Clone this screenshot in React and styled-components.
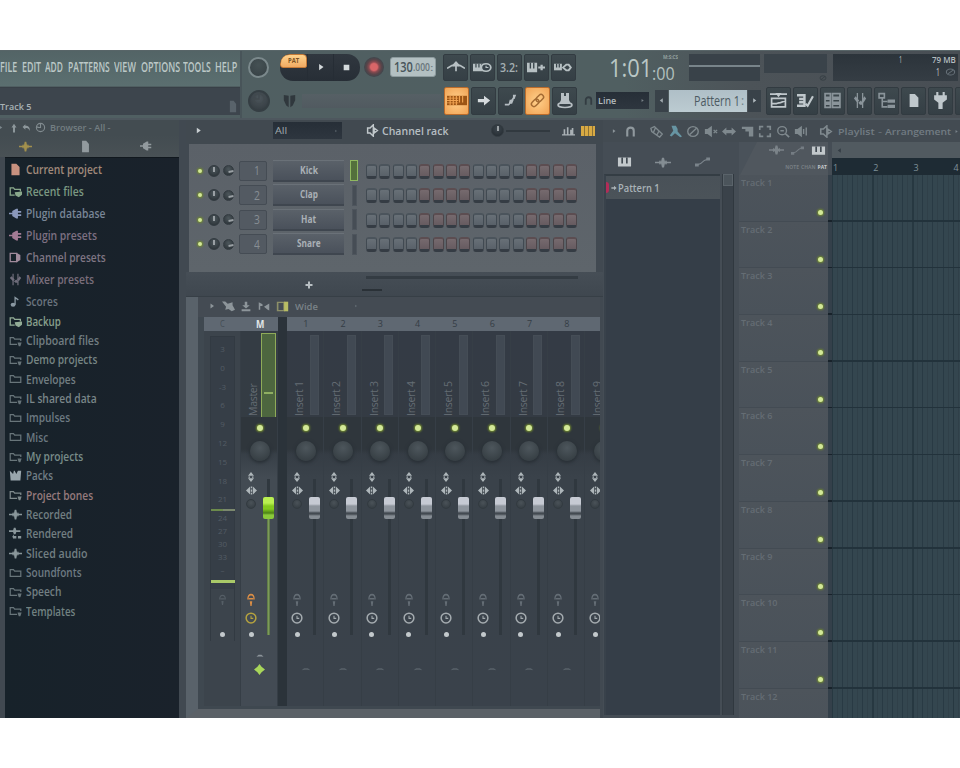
import React, { useLayoutEffect, useRef } from "react";
import styled, { createGlobalStyle, css } from "styled-components";

const Global = createGlobalStyle`
  * { box-sizing: border-box; }
  html, body { margin: 0; padding: 0; background: #fff; }
  body { width: 960px; height: 768px; overflow: hidden; font-family: "Open Sans", "Noto Sans", sans-serif; }
  svg { display: block; flex: none; }
`;

/* ---------- condensed text ---------- */
const FitBox = styled.span`
  display: block;
  flex: none;
  width: ${(p) => p.$w}px;
  height: ${(p) => Math.round(p.$size * 1.4)}px;
  line-height: ${(p) => Math.round(p.$size * 1.4)}px;
  font-size: ${(p) => p.$size}px;
  font-weight: ${(p) => p.$weight || 400};
  color: ${(p) => p.$color};
  margin-left: ${(p) => p.$ml || 0}px;
  white-space: nowrap;
`;
const FitInner = styled.span`
  display: inline-block;
  transform-origin: 0 50%;
`;
function Text({ w, size = 12, weight, color = "#9aa3a6", ml, children }) {
  const ref = useRef(null);
  useLayoutEffect(() => {
    ref.current.style.transform = `scaleX(${w / ref.current.offsetWidth})`;
  }, [w, children]);
  return (
    <FitBox $w={w} $size={size} $weight={weight} $color={color} $ml={ml}>
      <FitInner ref={ref}>{children}</FitInner>
    </FitBox>
  );
}

/* ---------- icons, drawn on a 16 unit grid ---------- */
const S = { fill: "none", stroke: "currentColor", strokeWidth: 1.6 };
const F = { fill: "currentColor" };
const icons = {
  play: <path {...F} d="M5 3l7 5-7 5z" />,
  left: <path {...F} d="M11 3L4 8l7 5z" />,
  stop: <path {...F} d="M3 3h10v10H3z" />,
  file: <path {...F} d="M3 1h6l4 4v10H3z" />,
  folder: <path {...S} strokeWidth="1.5" d="M1.5 12.5v-9h4l1.5 2h7.5v7z" />,
  folderDot: <><path {...S} strokeWidth="1.5" d="M10 12.500H1.500v-9h4l1.500 2h7.500V8" /><path {...F} d="M10.500 10h5l-1.500 5h-2z" /></>,
  folderTick: <><path {...S} strokeWidth="1.600" d="M7 12.500H1.500v-9h4l1.500 2h7V8" /><path {...F} d="M7 9l9-1v4l-4 3-4-2z" /></>,
  plug: <path {...F} d="M0 7h4V5l5-3h2v3h4v2h-4v2h4v2h-4v3H9l-5-3V9H0z" />,
  channel: <><path {...S} d="M1.500 3h8v10h-8z" /><path {...F} d="M9 2l5 3v6l-5 3z" /></>,
  mixer: <><path {...S} strokeWidth="1.500" d="M5 1v14M11 1v14" /><path {...F} d="M1 6l4 4 2-2-4-4zM6 10l3-2 2 2v2H8zM10 8l3-4 2 2-3 4z" /></>,
  note: <><ellipse {...F} cx="5" cy="12" rx="3" ry="2.500" /><path {...S} d="M7.500 12V3l4 3" /></>,
  pack: <path {...F} d="M1 2l4 4 1-4h1l2 4 2-4h1l3 0-1 12H2z" />,
  wave: <path {...F} d="M0 7h4l1-2 1 2 1-5h2l1 5 1-2 1 2h4v2h-4l-1 2-1-2-1 5H7L6 9l-1 2-1-2H0z" />,
  waveDot: <><path {...F} d="M0 4h5l1-3h2l1 3h5v2H9L8 9H6L5 6H0zM6 11h3v3H6zM11 11h4v3h-4zM4 12l2-3v6z" /></>,
  arrowUp: <path {...F} d="M8 1l5 6h-3v8H6V7H3z" />,
  undo: <path {...F} d="M6 2v3c6 0 8 3 8 9-2-4-4-5-8-5v3L1 7z" />,
  clock: <><circle {...S} cx="8" cy="8" r="6" /><path {...S} d="M8 3v5H4V6" /></>,
  metronome: <><path {...S} strokeWidth="1.500" d="M0 9c3-3 5-4 8-4s5 1 8 4M8 3v9" /><path {...F} d="M5 5l3-4 3 4v2H5z" /></>,
  keysClock: <><path {...F} d="M0 4h9v8H0z" /><path stroke="#38434a" strokeWidth="1" d="M2.500 4v4M5 4v4M7.500 4v4" /><circle cx="11" cy="8" r="4" fill="#38434a" stroke="currentColor" strokeWidth="1.500" /><path {...S} strokeWidth="1" d="M11 6v2h2" /></>,
  keysPlus: <><path {...F} d="M0 3h9v10H0zM10 7h6v2h-6zM12 5h2v6h-2z" /><path stroke="#38434a" strokeWidth="1.200" d="M3 3v6M6 3v6" /></>,
  keysLoop: <><path {...F} d="M0 4h7v7H0z" /><path stroke="#38434a" strokeWidth="1.100" d="M2.300 4v4M4.700 4v4" /><path {...S} strokeWidth="1.800" d="M8 8l3-3h2l2 3-2 3h-2z" /></>,
  piano: <><path {...F} d="M1 2h14v12H1z" /><path stroke="#3b444c" strokeWidth="1.700" d="M5.500 2v8M10.500 2v8" /></>,
  typing: <><path fill="#9c5515" d="M0 3h16v10H0z" /><path stroke="#f2a452" strokeWidth=".9" d="M0 5.500h9M0 8h9M0 10.500h9M2.500 3v10M5 3v10M7.500 3v10M10 3v7M12.500 3v7" /></>,
  right: <path {...F} d="M1 6h7V2l7 6-7 6v-4H1z" />,
  steps: <><path {...S} strokeWidth="2" d="M1 13h5c1 0 1-4 3-4l4-6" /><path {...F} d="M7 7l5 0-2 5H6zM11 1h4l-2 5h-2z" /></>,
  link: <g {...S} strokeWidth="1.600" transform="rotate(-45 8 8)"><rect x="0" y="5.300" width="9" height="5.400" rx="2.700" /><rect x="7" y="5.300" width="9" height="5.400" rx="2.700" /></g>,
  stamp: <><path {...F} d="M4 0h3v3h2V0h3v7l1 2v2H3V9l1-2z" /><ellipse cx="8" cy="12" rx="7" ry="2.500" {...S} /></>,
  magnet: <path {...S} strokeWidth="2.600" d="M4 14V7c0-5 8-5 8 0v7" />,
  playlist: <><path {...S} d="M1.500 6h13v8h-13zM1 11h4c2 0 2-1 5-1l5-2M0 2h16" /><path {...F} d="M5 1h6L8 5z" /></>,
  pianoRoll: <><path {...S} strokeWidth="2.300" d="M0 3h7v3.500H2M7 6.500V13H0M2 9.700h5" /><path {...S} strokeWidth="2" d="M8 11l2 2 5-9" /></>,
  rack: <path {...S} strokeWidth="1.600" d="M1 1.500h5V5H1zM8 1.500h7V5H8zM1 6.700h5v3H1zM8 6.700h7v3H8zM1 11.500h5v3H1zM8 11.500h7v3H8z" />,
  tree: <><path {...S} strokeWidth="1.500" d="M1 1.500h5v4H1zM4 6v8h5M4 9h5" /><path {...F} d="M9 7h7v3H9zM9 12h7v3H9z" /></>,
  jack: <path {...F} d="M4 0h2v3h4V0h2v3h2v4l-4 3v6H6v-6L2 7V3h2z" />,
  teeth: <path {...F} d="M1 1l6 1v13L4 13 1 7zM15 1L9 2v13l3-2 3-6z" />,
  speaker: <><path {...F} d="M1 5h3l5-4v14l-5-4H1z" /><path {...S} d="M11 5v6M14 3v10" /></>,
  mute: <><path {...F} d="M1 5h3l5-4v14l-5-4H1z" /><path {...S} d="M11 6l4 4M15 6l-4 4" /></>,
  speakerOut: <path {...S} strokeWidth="1.800" d="M2 5h3l4-4v14l-4-4H2zM10 5l4 3-4 3z" />,
  tag: <g {...S}><path d="M1 4l4-2 9 9-3 4L2 8zM6 4l-2 5M10 8l-2 4" /></g>,
  brush: <path {...F} d="M4 1l5 0 2 4 0 3 5 6-2 1-6-5-4 4-2-1 4-6z" />,
  ban: <><circle {...S} cx="8" cy="8" r="6" /><path {...S} d="M4 12l8-8" /></>,
  both: <path {...F} d="M0 8l5-5v3h6V3l5 5-5 5v-3H5v3z" />,
  slice: <path {...F} d="M1 2h13v12H9V8H5V5H1z" />,
  marquee: <path {...S} strokeWidth="1.900" d="M2 6V2h4M10 2h4v4M14 10v4h-4M6 14H2v-4" />,
  zoom: <><circle {...S} cx="7" cy="7" r="5" /><path {...S} strokeWidth="2" d="M10.500 10.500L15 15M5 7h4" /></>,
  curve: <><path {...S} strokeWidth="1.300" d="M2 12l4-2 4-4 4-2" /><path {...F} d="M0 10h4v4H0zM12 2h4v4h-4z" /></>,
  bars: <path {...F} d="M0 15v-2h2V5h2v8h2V2h2v11h2V6h2v-3h2v10h2v2z" />,
  plus: <path {...F} d="M6 1h4v5h5v4h-5v5H6v-5H1V6h5z" />,
  diamond: <path {...F} d="M8 0l3 4 5 4-5 4-3 4-3-4-5-4 5-4z" />,
  import: <path {...F} d="M6 1h4v5h4l-6 5-6-5h4zM1 12h14v3H1z" />,
  scissors: <path {...F} d="M0 2h4l3 3 6-2 0 4 3 6-4 2-4-3-4 1 1-4z" />,
  flip: <path {...F} d="M1 2l5 3v3l-3 0v6H1zM15 4v11l-2-1-5-5z" />,
  view: <><path fill="none" stroke="#8c8f68" strokeWidth="2" d="M2 2h8v12H2z" /><path fill="#b8bd64" d="M10 1h5v14h-5z" /></>,
  updown: <><path {...F} d="M8 0l6 6H2zM2 10h12l-6 6zM3 7h3v2H3zM10 7h3v2h-3z" /></>,
  sideways: <><path {...F} d="M6 1v14L0 8zM10 1v14l6-7z" /><path {...F} d="M7 1h2v3H7zM7 6h2v4H7zM7 12h2v3H7z" /></>,
  ghost: <><path {...S} strokeWidth="2" d="M3 8c0-8 10-8 10 0" /><path {...F} d="M4 6h8v2H4zM6 10h4l-1 6H7z" /></>,
  timer: <><circle {...S} cx="8" cy="8" r="6.500" strokeWidth="2" /><path {...S} strokeWidth="1.400" d="M8 5v3.500h3" /></>,
  caret: <path {...F} d="M1 11l4-5h6l4 5-5-1H6z" />,
};
const IconSvg = styled.svg`
  color: ${(p) => p.$color};
  margin-left: ${(p) => p.$ml || 0}px;
`;
const Icon = ({ n, s = 14, h, c = "#aeb6ba", ml }) => (
  <IconSvg viewBox="0 0 16 16" width={s} height={h || s} preserveAspectRatio="none" $color={c} $ml={ml}>
    {icons[n]}
  </IconSvg>
);

/* ---------- frame ---------- */
const Frame = styled.main`
  margin-top: 50px;
  width: 960px;
  height: 668px;
  overflow: hidden;
  background: #444c54;
`;
const Header = styled.header`
  height: 68px;
  display: grid;
  grid-template-columns: 242px 1fr;
  background: linear-gradient(90deg, #505f62 0, #505f61 65%, #4c5358 78%, #484e54 100%);
  border-top: 1px solid #586568;
`;
const HeaderLeft = styled.div`
  display: flex;
  flex-direction: column;
  border-right: 2px solid #485459;
`;
const MenuBar = styled.nav`
  height: 35px;
  display: flex;
  align-items: center;
  background: linear-gradient(#536466, #5b6f70);
  padding-bottom: 2px;
`;
const HintBar = styled.div`
  height: 28px;
  margin-top: 1px;
  background: #3d454d;
  display: flex;
  align-items: flex-end;
  justify-content: space-between;
  border-top: 1px solid #384047;
  padding: 0 2px 2px 0;
`;
const Bars = styled.div`
  display: flex;
  flex-direction: column;
  overflow: hidden;
`;
const Bar = styled.div`
  height: ${(p) => p.$h}px;
  display: flex;
  align-items: center;
  background: ${(p) => p.$bg || "none"};
`;
const Knob = styled.div`
  width: ${(p) => p.$s}px;
  height: ${(p) => p.$s}px;
  margin-left: ${(p) => p.$ml || 0}px;
  flex: none;
  border-radius: 50%;
  border: ${(p) => p.$ring || "1px solid #333b41"};
  background: radial-gradient(circle at 50% 35%, ${(p) => p.$hi || "#4d575c"}, ${(p) => p.$lo || "#343d43"});
  box-shadow: ${(p) => p.$shadow || "none"};
  display: flex;
  justify-content: center;
`;
const Tick = styled.i`
  width: 2px;
  height: 5px;
  margin-top: 1px;
  background: #9aa0a4;
  transform: ${(p) => (p.$side ? "translate(2px, 2px) rotate(80deg)" : "none")};
`;
const Transport = styled.div`
  width: 80px;
  height: 27px;
  margin-left: 11px;
  flex: none;
  border-radius: 10px 13px 13px 13px;
  background: linear-gradient(#30373f, #272e36);
  display: flex;
  overflow: hidden;
`;
const PatSwitch = styled.div`
  width: 27px;
  height: 14px;
  border-radius: 9px 4px 2px 3px;
  background: linear-gradient(#ffd38d, #f0aa63);
  border: 1px solid #c47a38;
  display: flex;
  align-items: center;
  justify-content: center;
`;
const TransportKey = styled.div`
  width: 26px;
  display: flex;
  align-items: center;
  justify-content: center;
  border-left: 1px solid #262d35;
`;
const Record = styled.div`
  width: 20px;
  height: 20px;
  margin-left: 4px;
  flex: none;
  border-radius: 50%;
  background: radial-gradient(circle, #d96668 0 24%, #894a50 36%, #5a4449 52%, #42464c 68%);
`;
const Tempo = styled.div`
  width: 46px;
  height: 20px;
  margin-left: 6px;
  flex: none;
  border-radius: 3px;
  background: #b3c0c2;
  border: 1px solid #8d9b9e;
  display: flex;
  align-items: center;
  padding-left: 3px;
`;
const Tool = styled.div`
  width: 25px;
  height: ${(p) => p.$h || 27}px;
  margin-left: ${(p) => p.$ml ?? 2}px;
  flex: none;
  border-radius: 2px;
  display: flex;
  align-items: center;
  justify-content: center;
  background: linear-gradient(#3e494e, #353f45);
  border: 1px solid #323b41;
  ${(p) => p.$on && css`
    background: radial-gradient(#ffd08b, #f1a354);
    border-color: #ba6c2c;
  `}
`;
const Dark = styled.div`
  width: ${(p) => p.$w}px;
  height: ${(p) => p.$h}px;
  margin-left: ${(p) => p.$ml}px;
  margin-top: ${(p) => p.$mt || 0}px;
  flex: none;
  background: ${(p) => p.$bg || "#394249"};
  display: flex;
  flex-direction: ${(p) => p.$dir || "row"};
  align-items: ${(p) => p.$align || "center"};
  justify-content: ${(p) => p.$just || "flex-start"};
  padding: ${(p) => p.$pad || 0};
`;
const ScopeLine = styled.div`
  width: 100%;
  height: 2px;
  margin-top: -3px;
  background: #78848a;
`;
const Slider = styled.div`
  width: ${(p) => p.$w}px;
  height: ${(p) => p.$h || 2}px;
  margin-left: ${(p) => p.$ml}px;
  flex: none;
  background: ${(p) => p.$c || "#3e484d"};
`;
const PatternName = styled.div`
  width: 78px;
  height: 22px;
  margin-left: 1px;
  flex: none;
  display: flex;
  align-items: center;
  background: linear-gradient(#afbfc7, #bccbd1);
`;
const CpuRow = styled.div`
  display: flex;
  justify-content: flex-end;
  align-items: center;
  gap: ${(p) => p.$gap}px;
  height: 12px;
`;

/* ---------- browser ---------- */
const Body = styled.div`
  height: 600px;
  display: grid;
  grid-template-columns: 186px 417px 357px;
`;
const Browser = styled.aside`
  background: #414951;
  border-top: 2px solid #4e575e;
  padding: 0 7px 0 0;
`;
const BrowserPath = styled.div`
  height: 15px;
  display: flex;
  align-items: center;
  background: #434c51;
`;
const BrowserTabs = styled.div`
  height: 22px;
  display: flex;
  align-items: center;
  background: linear-gradient(#434c51, #495155);
`;
const FileList = styled.div`
  margin-left: 5px;
  height: 561px;
  background: linear-gradient(90deg, #17222a, #1a222b);
  border-top: 1px solid #11181e;
`;
const FileRow = styled.div`
  height: ${(p) => (p.$big ? 22 : 19.35)}px;
  display: flex;
  align-items: center;
  padding: 0 0 ${(p) => (p.$big ? 0 : 1)}px 4px;
`;
const files = [
  ["file", "Current project", 76, "#a18a7b", "#c8917f"],
  ["folderTick", "Recent files", 58, "#7b9982", "#8aa98c"],
  ["plug", "Plugin database", 79, "#798697", "#8a98bb"],
  ["plug", "Plugin presets", 71, "#7d7082", "#a37b94"],
  ["channel", "Channel presets", 80, "#7f7684", "#a18b9c"],
  ["mixer", "Mixer presets", 68, "#7a6e7b", "#6f6d7b"],
  ["note", "Scores", 32, "#6b757f", "#8a98a2"],
  ["folderTick", "Backup", 35, "#88a08d", "#93ad97"],
  ["folderDot", "Clipboard files", 73, "#727e82"],
  ["folderDot", "Demo projects", 71, "#778685"],
  ["folder", "Envelopes", 50, "#727e82"],
  ["folderDot", "IL shared data", 71, "#7a8689"],
  ["folder", "Impulses", 44, "#6d7a82"],
  ["folder", "Misc", 22, "#6b7880"],
  ["folderDot", "My projects", 57, "#788c89"],
  ["pack", "Packs", 27, "#727f87", "#99a6ad"],
  ["folderDot", "Project bones", 67, "#967b7d", "#7f8a8c"],
  ["wave", "Recorded", 46, "#727f82", "#89969a"],
  ["waveDot", "Rendered", 47, "#727f82", "#89969a"],
  ["wave", "Sliced audio", 61, "#727f82", "#89969a"],
  ["folder", "Soundfonts", 56, "#6d7a82"],
  ["folderDot", "Speech", 35, "#727f82"],
  ["folderDot", "Templates", 49, "#728282"],
];

/* ---------- channel rack ---------- */
const Middle = styled.section`
  display: flex;
  flex-direction: column;
  overflow: hidden;
  background: #414951;
  border-top: 2px solid #4e575e;
`;
const RackTitle = styled.div`
  height: 24px;
  display: flex;
  align-items: center;
  background: #414950;
  padding-bottom: 3px;
`;
const Select = styled.div`
  width: ${(p) => p.$w}px;
  height: 17px;
  margin-left: ${(p) => p.$ml}px;
  flex: none;
  display: flex;
  align-items: center;
  justify-content: space-between;
  padding: 0 4px 0 2px;
  background: linear-gradient(#262e37, #2e363f);
`;
const RackBody = styled.div`
  width: 407px;
  height: 128px;
  margin-left: 3px;
  padding-top: 14.500px;
  background: linear-gradient(#5b6168, #5e656b);
`;
const ChannelRow = styled.div`
  height: 24.500px;
  display: flex;
  align-items: center;
`;
const Led = styled.i`
  width: ${(p) => p.$s || 5}px;
  height: ${(p) => p.$s || 5}px;
  margin-left: ${(p) => p.$ml || 0}px;
  flex: none;
  border-radius: 50%;
  background: #d3e898;
  box-shadow: 0 0 2px 1px #71892f;
`;
const ChannelNumber = styled.div`
  width: 28px;
  height: 20px;
  margin-left: 5px;
  padding-left: 14px;
  flex: none;
  display: flex;
  align-items: center;
  background: #535a62;
  border: 1px solid #454c54;
  border-radius: 2px;
`;
const ChannelName = styled.div`
  width: 71px;
  height: 22px;
  margin-left: 6px;
  flex: none;
  display: flex;
  align-items: center;
  justify-content: center;
  padding-bottom: 1px;
  background: linear-gradient(#5a6169, #4a515b);
  border-bottom: 2px solid #3f464f;
  border-top: 1px solid #6a7178;
`;
const ChannelSelect = styled.div`
  width: ${(p) => (p.$on ? 8 : 5)}px;
  height: 21px;
  flex: none;
  margin: 0 ${(p) => (p.$on ? 8 : 9.500)}px 0 ${(p) => (p.$on ? 6 : 7.500)}px;
  background: ${(p) => (p.$on ? "#53703c" : "#464d55")};
  border: 1px solid ${(p) => (p.$on ? "#8fb860" : "#4e555d")};
`;
const Step = styled.i`
  width: 11px;
  height: 15px;
  margin: 1px 2.350px 0 0;
  flex: none;
  border-radius: 3px;
  border: 1px solid ${(p) => (p.$red ? "#4c4549" : "#414a52")};
  border-top: 2px solid ${(p) => (p.$red ? "#5c4d51" : "#4b545c")};
  border-bottom: 3px solid #353c44;
  background: linear-gradient(${(p) => (p.$red ? "#766a6e, #665b60" : "#687077, #596169")});
`;
const RackFooter = styled.div`
  height: 25px;
  display: grid;
  grid-template-columns: 172px 239px;
  align-items: center;
  background: linear-gradient(#464e56, #3f474f);
  border-bottom: 1px solid #373f46;
`;
const AddChannel = styled.div`
  padding: 2px 0 0 119px;
`;
const Scrollers = styled.div`
  display: flex;
  flex-direction: column;
  gap: 10px;
  padding-bottom: 2px;
`;
const channels = [["1", "Kick", 18], ["2", "Clap", 18], ["3", "Hat", 15], ["4", "Snare", 24]];

/* ---------- mixer ---------- */
const Mixer = styled.div`
  flex: 1;
  width: 414px;
  border-left: 12px solid #59626a;
  border-bottom: 9px solid #5b6167;
  background: #3f4850;
  padding: 0 0 5px 6px;
  overflow: hidden;
`;
const MixerBar = styled.div`
  height: 20px;
  display: flex;
  align-items: center;
  padding-bottom: 2px;
  background: #444b53;
  margin-left: -6px;
`;
const Strips = styled.div`
  display: flex;
  height: 389px;
  overflow: hidden;
`;
const Strip = styled.div`
  width: ${(p) => p.$w || 37.300}px;
  flex: none;
  display: flex;
  flex-direction: column;
  background: ${(p) => p.$bg || "linear-gradient(#343b45 30px, #343b43 130px, #3a424a 160px, #3a424b)"};
  border-right: 1px solid #363e46;
`;
const StripNumber = styled.div`
  height: 14px;
  flex: none;
  margin-right: -1px;
  background: #5f6872;
  display: flex;
  justify-content: center;
  align-items: center;
  padding-bottom: 1px;
`;
const StripTop = styled.div`
  height: 86px;
  flex: none;
  display: flex;
  padding: 3px 0 0 6px;
`;
const VerticalName = styled.div`
  width: 12px;
  height: 82px;
  display: flex;
  writing-mode: vertical-rl;
  transform: rotate(180deg);
  font: 10.500px/12px "Open Sans", sans-serif;
  letter-spacing: -0.300px;
  color: #656d74;
`;
const Level = styled.div`
  width: ${(p) => (p.$master ? 15 : 9)}px;
  height: ${(p) => (p.$master ? 85 : 80)}px;
  margin-left: ${(p) => (p.$master ? 2 : 4.500)}px;
  margin-top: ${(p) => (p.$master ? -1 : 1)}px;
  flex: none;
  background: ${(p) => (p.$master ? "#4d663f" : "#414953")};
  border: ${(p) => (p.$master ? "1.500px solid #8fab59" : "1px solid #454d56")};
  display: flex;
  align-items: center;
  padding-top: 34px;
`;
const LevelMark = styled.i`
  width: 9px;
  height: 2px;
  margin: auto;
  background: #8fae62;
`;
const StripPan = styled.div`
  height: 52px;
  flex: none;
  display: flex;
  flex-direction: column;
  align-items: center;
  padding: 8px 0 0 1px;
  gap: 10px;
  background: linear-gradient(#2f363c 0 32px, transparent 37px);
`;
const StripLow = styled.div`
  flex: 1;
  display: grid;
  grid-template-columns: 20px 15px;
`;
const Switches = styled.div`
  display: flex;
  flex-direction: column;
  align-items: center;
  padding-top: 3px;
`;
const Gap = styled.div`
  height: ${(p) => p.$h}px;
  flex: none;
`;
const Dot = styled.i`
  width: 5px;
  height: 5px;
  flex: none;
  border-radius: 50%;
  background: #c3c9cc;
`;
const FaderTrack = styled.div`
  width: 15px;
  display: flex;
  flex-direction: column;
  align-items: center;
  padding-top: 10px;
  height: 166px;
`;
const FaderLine = styled.i`
  width: 3px;
  flex: ${(p) => (p.$h ? "none" : "1")};
  height: ${(p) => p.$h || 0}px;
  background: ${(p) => (p.$on ? "linear-gradient(90deg, #54703f, #7c9a5a, #54703f)" : "#30383f")};
`;
const FaderCap = styled.div`
  width: 11px;
  height: 22px;
  flex: none;
  border-radius: 2px;
  background: ${(p) => p.$on
    ? "linear-gradient(#b9ef51 0 6px, #83c91e 9px 12px, #4d8216 16px, #8ac93a 18px)"
    : "linear-gradient(#c6cad3 0 7px, #8e959d 9px 14px, #434a51 16px 17px, #858c93 19px)"};
`;
const StripFoot = styled.div`
  height: 70px;
  flex: none;
  display: flex;
  flex-direction: column;
  align-items: center;
  padding: 15px 0 0 1px;
  gap: 5px;
`;
const Separator = styled.div`
  width: 9px;
  flex: none;
  background: #2b333a;
`;
const Meter = styled.div`
  width: 25px;
  height: 305px;
  margin: 5px 0 0 6px;
  flex: none;
  display: flex;
  flex-direction: column;
  align-items: center;
  background: linear-gradient(#363e47 0 252px, #3c444c 252px);
  border: 1px solid #323a42;
  border-bottom: 0;
  font: 8px/18.800px "Open Sans", sans-serif;
  color: #535c65;
  padding-top: 3px;
`;
const MeterPeak = styled.i`
  width: 24px;
  height: ${(p) => p.$h}px;
  flex: none;
  background: ${(p) => p.$c};
`;
const MeterFine = styled.div`
  height: 69px;
  line-height: 13px;
  text-align: center;
`;

/* ---------- playlist ---------- */
const Playlist = styled.section`
  display: flex;
  flex-direction: column;
  overflow: hidden;
  background: #454d55;
  border-top: 2px solid #4e575e;
`;
const PlaylistBar = styled.div`
  height: 22px;
  flex: none;
  display: flex;
  align-items: center;
  background: #434b52;
`;
const PlaylistBody = styled.div`
  flex: 1;
  display: grid;
  grid-template-columns: 136px 89px 4px 128px;
  overflow: hidden;
`;
const Picker = styled.div`
  display: flex;
  flex-direction: column;
`;
const PickerTabs = styled.div`
  height: 32px;
  flex: none;
  display: flex;
  align-items: center;
  padding-top: 8px;
`;
const PickerMain = styled.div`
  flex: 1;
  display: grid;
  grid-template-columns: 116px 12px;
  gap: 2px;
  padding: 0 0 3px 1px;
`;
const PatternList = styled.div`
  background: #353e48;
  border-top: 2px solid #343d44;
  border-left: 2px solid #39424b;
`;
const PatternItem = styled.div`
  height: 23px;
  display: flex;
  align-items: center;
  background: linear-gradient(#495158, #4b5359);
`;
const PatternTag = styled.i`
  width: 3px;
  height: 11px;
  background: #b32c58;
  border-radius: 0 4px 4px 0;
`;
const ScrollTrack = styled.div`
  background: #3a424a;
  border-right: 1px solid #30383f;
  border-left: 1px solid #343c43;
`;
const ScrollThumb = styled.div`
  height: 12px;
  background: #4b545b;
  border: 1px solid #5a636a;
`;
const Tracks = styled.div`
  display: flex;
  flex-direction: column;
  overflow: hidden;
  background: #4a525a;
`;
const TracksHead = styled.div`
  height: 33px;
  flex: none;
  background: #50575e;
  clip-path: polygon(18px 0, 100% 0, 100% 100%, 1px 100%);
  padding: 0 1px 0 30px;
`;
const TracksTabs = styled.div`
  height: 16px;
  display: flex;
  align-items: center;
  gap: 7px;
`;
const TracksModes = styled.div`
  display: flex;
  font: 700 5px/19px "Open Sans", sans-serif;
  color: #777e83;
  gap: 2px;
  justify-content: flex-end;
`;
const ModeOn = styled.span`
  color: #c5cacc;
`;
const Track = styled.div`
  height: 46.700px;
  flex: none;
  display: flex;
  flex-direction: column;
  justify-content: space-between;
  padding: 1px 0 5.500px 2px;
  border-bottom: 1px solid #434b53;
  background: linear-gradient(#4d545b, #4a525a);
`;
const Edge = styled.div`
  margin-top: 33px;
  background: repeating-linear-gradient(#34404a 0 45px, #18222a 45px 46.700px);
`;
const Timeline = styled.div`
  display: flex;
  flex-direction: column;
`;
const Overview = styled.div`
  height: 16px;
  flex: none;
  background: #515a60;
  display: flex;
  align-items: center;
`;
const Ruler = styled.div`
  height: 17px;
  flex: none;
  display: grid;
  grid-template-columns: repeat(4, 40.200px);
  background: #1e2b34;
  font: 9px/19px "Open Sans", sans-serif;
  color: #7f9098;
  padding-left: 1px;
`;
const Lanes = styled.div`
  flex: 1;
  background:
    repeating-linear-gradient(transparent 0 45.200px, #22323b 45.200px 46.700px),
    repeating-linear-gradient(90deg, #273841 0 1.500px, transparent 1.500px 40.200px),
    repeating-linear-gradient(90deg, #293a44 0 1px, #34464f 1px 5px, #304049 5px 6px, #34464f 6px 10.050px);
`;

const row1Tools = [["metronome", 18], ["keysClock", 19], null, ["keysPlus", 18], ["keysLoop", 18]];
const viewTools = ["playlist", "pianoRoll", "rack", "mixer", "tree", "file", "jack"];
const plTools = [["tag", 13], ["brush", 4], ["ban", 4], ["mute", 4], ["both", 4], ["slice", 5], ["marquee", 3], ["zoom", 4], ["speaker", 4], ["speakerOut", 11]];

function MixerStrip({ n, label, master, last }) {
  return (
    <Strip $w={master ? 37 : undefined} $bg={master ? "linear-gradient(#343c44 30px, #343c43 130px, #434b53 160px, #434b54)" : undefined}>
      <StripNumber>
        {master ? <Text w={8} size={10} weight={700} color="#e2e7e8">M</Text> : !last && <Text w={5} size={9} color="#353d45">{n}</Text>}
      </StripNumber>
      <StripTop>
        <VerticalName>{label}</VerticalName>
        <Level $master={master}>{master && <LevelMark />}</Level>
      </StripTop>
      <StripPan>
        <Led $s={6} />
        <Knob $s={20} $hi="#4d565c" $lo="#30383d" $ring="0 solid transparent" $shadow="0 1px 3px 1px #2a3137" />
      </StripPan>
      <StripLow>
        <Switches>
          <Icon n="updown" s={8} h={10} />
          <Gap $h={4} />
          <Icon n="sideways" s={11} h={9} />
          <Gap $h={4} />
          <Knob $s={10} $hi="#4a5258" $lo="#31393f" />
          <Gap $h={84} />
          <Icon n="ghost" s={10} h={13} c={master ? "#d98d46" : "#646d75"} />
          <Gap $h={6} />
          <Icon n="timer" s={12} c={master ? "#b5a23f" : "#a4abaf"} />
          <Gap $h={8} />
          <Dot />
        </Switches>
        <FaderTrack>
          <FaderLine $h={18} />
          <FaderCap $on={master} />
          <FaderLine $on={master} />
        </FaderTrack>
      </StripLow>
      <StripFoot>
        {master ? <><Icon n="caret" s={8} h={7} c="#8c949a" /><Icon n="diamond" s={11} c="#a8d65a" /></> : <><Gap $h={9} /><Icon n="caret" s={10} h={6} c="#59626a" /></>}
      </StripFoot>
    </Strip>
  );
}

export default function App() {
  return (
    <>
      <Global />
      <Frame>
        <Header>
          <HeaderLeft>
            <MenuBar>
              {[["FILE", 17, 0], ["EDIT", 19, 5], ["ADD", 18, 4], ["PATTERNS", 42, 5], ["VIEW", 22, 4], ["OPTIONS", 39, 5], ["TOOLS", 28, 3], ["HELP", 22, 4]].map(([t, w, ml]) => (
                <Text key={t} w={w} ml={ml} size={13.500} weight={600} color="#bcc8c7">{t}</Text>
              ))}
            </MenuBar>
            <HintBar>
              <Text w={31} size={9} weight={600} color="#a9b2b5">Track 5</Text>
              <Icon n="file" s={10} h={13} c="#59636b" />
            </HintBar>
          </HeaderLeft>
          <Bars>
            <Bar $h={32}>
              <Knob $s={21} $ml={6} $ring="2px solid #7b898c" $hi="#455154" $lo="#364044" />
              <Transport>
                <PatSwitch><Text w={11} size={7} weight={700} color="#7c5224">PAT</Text></PatSwitch>
                <TransportKey><Icon n="play" s={10} c="#d4dadc" /></TransportKey>
                <TransportKey><Icon n="stop" s={9} c="#d4dadc" /></TransportKey>
              </Transport>
              <Record />
              <Tempo>
                <Text w={19} size={14.500} weight={600} color="#48555a">130</Text>
                <Text w={17} size={10} weight={600} color="#68757a">.000</Text>
                <Text w={3} size={9} color="#68757a">:</Text>
              </Tempo>
              {row1Tools.map((t, i) => (
                <Tool key={i} $ml={i ? 1.900 : 7}>
                  {t ? <Icon n={t[0]} s={t[1]} h={15} c="#b7c0c3" /> : <Text w={18} size={13} weight={600} color="#a5afb3">3.2:</Text>}
                </Tool>
              ))}
              <Text w={43} ml={33} size={25} color="#bac7c5">1:01</Text>
              <Dark $w={26} $h={29} $ml={0} $bg="none" $dir="column" $align="flex-start" $pad="0">
                <Text w={15} ml={11} size={5.500} weight={700} color="#93a09f">M:S:CS</Text>
                <Text w={23} ml={0} size={17.500} color="#b3c0be">:00</Text>
              </Dark>
              <Dark $w={71} $h={27} $ml={11}><ScopeLine /></Dark>
              <Dark $w={63} $h={19} $ml={4} $mt={-8} $bg="#3a434a" />
              <Dark $w={9} $h={27} $ml={-8} $bg="none" $align="flex-end"><Icon n="ban" s={8} h={6} c="#30393f" /></Dark>
              <Dark $w={125} $h={27} $ml={5} $dir="column" $align="stretch" $bg="linear-gradient(#2c343b,#353d44)" $pad="0 2px 0 0">
                <CpuRow $gap={30}><Text w={3} size={9} color="#c6cdd0">1</Text><Text w={24} size={9} weight={600} color="#b5bdc0">79 MB</Text></CpuRow>
                <CpuRow $gap={5}><Text w={4} size={10} color="#c6cdd0">1</Text><Icon n="ban" s={11} h={8} c="#667078" /></CpuRow>
              </Dark>
            </Bar>
            <Bar $h={35}>
              <Knob $s={22} $ml={6} $hi="#4c555b" $lo="#30383d" $ring="2px solid #353e43"><Icon n="clock" s={14} c="#41494e" /></Knob>
              <Icon n="teeth" s={13} h={14} ml={13} c="#30383d" />
              <Slider $w={139} $ml={6} $h={14} $c="linear-gradient(#566065, #515a60)" />
              <Tool $on $h={28} $ml={3}><Icon n="typing" s={20} h={15} /></Tool>
              <Tool $h={28}><Icon n="right" s={14} h={13} c="#d5dadd" /></Tool>
              <Tool $h={28}><Icon n="steps" s={13} c="#b4bcc1" /></Tool>
              <Tool $on $h={28}><Icon n="link" s={15} c="#a36a32" /></Tool>
              <Tool $h={28}><Icon n="stamp" s={16} c="#b7bfc3" /></Tool>
              <Icon n="magnet" s={11} ml={6} c="#333c42" />
              <Select $w={53} $ml={2}><Text w={18} size={8} weight={600} color="#b5bbbe">Line</Text><Icon n="play" s={5} c="#788187" /></Select>
              <Dark $w={13} $h={22} $ml={6} $just="center"><Icon n="left" s={7} c="#a0a9ae" /></Dark>
              <PatternName><Text w={46} ml={25} size={14} color="#4c5a62">Pattern 1</Text><Text w={3} ml={1} size={12} color="#71808a">:</Text></PatternName>
              <Dark $w={13} $h={22} $ml={1} $just="center"><Icon n="play" s={7} c="#b0b9be" /></Dark>
              {viewTools.map((n, i) => (
                <Tool key={n} $h={28} $ml={i ? 2 : 5}><Icon n={n} s={n === "file" || n === "mixer" ? 14 : 17} h={n === "file" ? 15 : 17} c={["rack", "mixer", "tree"].includes(n) ? "#8a949a" : "#c0c8cc"} /></Tool>
              ))}
              <Tool $h={28} />
            </Bar>
          </Bars>
        </Header>
        <Body>
          <Browser>
            <BrowserPath>
              <Icon n="play" s={7} c="#7c878c" ml={-3} />
              <Icon n="arrowUp" s={8} h={10} ml={6} c="#8d979b" />
              <Icon n="undo" s={9} ml={4} c="#8d979b" />
              <Icon n="clock" s={11} ml={4} c="#818b8f" />
              <Text w={61} size={8.500} weight={600} ml={4} color="#737e82">Browser - All -</Text>
            </BrowserPath>
            <BrowserTabs>
              <Icon n="wave" s={13} ml={19} c="#a2904d" />
              <Icon n="file" s={11} h={13} ml={48} c="#929a9e" />
              <Icon n="plug" s={12} ml={49} c="#929a9e" />
            </BrowserTabs>
            <FileList>
              {files.map(([ic, name, w, c, ic2], i) => (
                <FileRow key={name} $big={i < 7}>
                  <Icon n={ic} s={13} h={ic === "folder" || ic === "folderDot" ? 12 : 13} c={ic2 || "#68757a"} />
                  <Text w={w} size={12} weight={600} ml={3.500} color={c}>{name}</Text>
                </FileRow>
              ))}
            </FileList>
          </Browser>

          <Middle>
            <RackTitle>
              <Icon n="play" s={9} ml={8} c="#c8ced1" />
              <Select $w={69} $ml={70}><Text w={12} size={9} color="#a0a8ac">All</Text><Icon n="play" s={4} c="#59636a" /></Select>
              <Icon n="speakerOut" s={13} ml={24} c="#c1c8cb" />
              <Text w={66} size={11} weight={600} ml={3} color="#b6bec2">Channel rack</Text>
              <Knob $s={13} $ml={43} $hi="#3d464d" $lo="#22292f"><Tick /></Knob>
              <Slider $w={44} $ml={2} $c="#31393f" />
              <Icon n="bars" s={13} h={10} ml={12} c="#aab1b5" />
              <Dark $w={14} $h={10} $ml={6} $bg="repeating-linear-gradient(90deg,#d9aa43 0 3px,#8c7236 3px 4px)" />
            </RackTitle>
            <RackBody>
              {channels.map(([n, name, w], r) => (
                <ChannelRow key={n}>
                  <Led $s={4} $ml={9} />
                  <Knob $s={12} $ml={6} $lo="#272e33"><Tick /></Knob>
                  <Knob $s={11} $ml={3} $lo="#272e33"><Tick $side /></Knob>
                  <ChannelNumber><Text w={6} size={12} color="#878e94">{n}</Text></ChannelNumber>
                  <ChannelName><Text w={w} size={10} weight={700} color="#aab0b6">{name}</Text></ChannelName>
                  <ChannelSelect $on={r === 0} />
                  {Array.from({ length: 16 }, (_, i) => <Step key={i} $red={Math.floor(i / 4) % 2 === 1} />)}
                </ChannelRow>
              ))}
            </RackBody>
            <RackFooter>
              <AddChannel><Icon n="plus" s={8} c="#b8bfc3" /></AddChannel>
              <Scrollers>
                <Slider $w={212} $ml={8} $h={3} $c="#343c43" />
                <Slider $w={20} $ml={4} $h={2} $c="#2a3137" />
              </Scrollers>
            </RackFooter>
            <Mixer>
              <MixerBar>
                <Icon n="play" s={8} ml={10} c="#8d959a" />
                <Icon n="scissors" s={13} h={12} ml={6} c="#8d959a" />
                <Icon n="import" s={10} h={11} ml={6} c="#8d959a" />
                <Icon n="flip" s={12} h={10} ml={7} c="#8d959a" />
                <Icon n="view" s={13} h={11} ml={6} />
                <Text w={23} size={9} weight={600} ml={6} color="#7a8388">Wide</Text>
                <Icon n="play" s={4} ml={36} c="#667077" />
              </MixerBar>
              <Strips>
                <Strip $w={37} $bg="#3c444c">
                  <StripNumber><Text w={5} size={9} color="#444d55">C</Text></StripNumber>
                  <Meter>
                    {["3", "0", "-3", "6", "9", "12", "15", "18", "21"].map((t) => <span key={t}>{t}</span>)}
                    <MeterPeak $h={2} $c="linear-gradient(90deg,#6c8b4c 0 50%,#7b886e 50%)" />
                    <MeterFine>24<br />27<br />30<br />33<br />–</MeterFine>
                    <MeterPeak $h={3} $c="#a9c968" />
                    <Gap $h={11} />
                    <Icon n="ghost" s={9} h={11} c="#555e66" />
                    <Gap $h={27} />
                    <Dot />
                  </Meter>
                </Strip>
                <MixerStrip master label="Master" />
                <Separator />
                {Array.from({ length: 9 }, (_, i) => <MixerStrip key={i} n={i + 1} last={i === 8} label={`Insert ${i + 1}`} />)}
              </Strips>
            </Mixer>
          </Middle>

          <Playlist>
            <PlaylistBar>
              <Icon n="play" s={6} ml={8} c="#8b9499" />
              <Icon n="magnet" s={13} ml={7} c="#90999e" />
              {plTools.map(([n, ml]) => <Icon key={n} n={n} s={14} h={13} ml={ml} c={n === "brush" ? "#6795a3" : "#7f898e"} />)}
              <Text w={37} size={9.500} weight={600} ml={5} color="#727c83">Playlist</Text>
              <Text w={4} size={9.500} ml={3} color="#727c83">-</Text>
              <Text w={66} size={9.500} weight={600} ml={3} color="#727c83">Arrangement</Text>
              <Icon n="play" s={5} ml={3} c="#79838a" />
            </PlaylistBar>
            <PlaylistBody>
              <Picker>
                <PickerTabs>
                  <Icon n="piano" s={15} h={12} ml={14} c="#c3c9cc" />
                  <Icon n="wave" s={16} h={13} ml={23} c="#848d93" />
                  <Icon n="curve" s={15} h={12} ml={24} c="#7b848b" />
                </PickerTabs>
                <PickerMain>
                  <PatternList>
                    <PatternItem><PatternTag /><Icon n="right" s={6} ml={2} c="#abb3b7" /><Text w={42} size={10} weight={600} ml={1} color="#a9b2b7">Pattern 1</Text></PatternItem>
                  </PatternList>
                  <ScrollTrack><ScrollThumb /></ScrollTrack>
                </PickerMain>
              </Picker>
              <Tracks>
                <TracksHead>
                  <TracksTabs>
                    <Icon n="wave" s={15} h={12} c="#7b8389" />
                    <Icon n="curve" s={13} h={11} c="#747c83" />
                    <Icon n="piano" s={15} h={11} c="#c2c8cb" />
                  </TracksTabs>
                  <TracksModes><span>NOTE</span><span>CHAN</span><ModeOn>PAT</ModeOn></TracksModes>
                </TracksHead>
                {Array.from({ length: 12 }, (_, i) => (
                  <Track key={i}>
                    <Text w={i > 8 ? 36 : 31} size={9} weight={600} color="#656d74">{`Track ${i + 1}`}</Text>
                    <Led $s={5} $ml={77} />
                  </Track>
                ))}
              </Tracks>
              <Edge />
              <Timeline>
                <Overview><Icon n="left" s={7} ml={4} c="#343d44" /></Overview>
                <Ruler><span>1</span><span>2</span><span>3</span><span>4</span></Ruler>
                <Lanes />
              </Timeline>
            </PlaylistBody>
          </Playlist>
        </Body>
      </Frame>
    </>
  );
}
